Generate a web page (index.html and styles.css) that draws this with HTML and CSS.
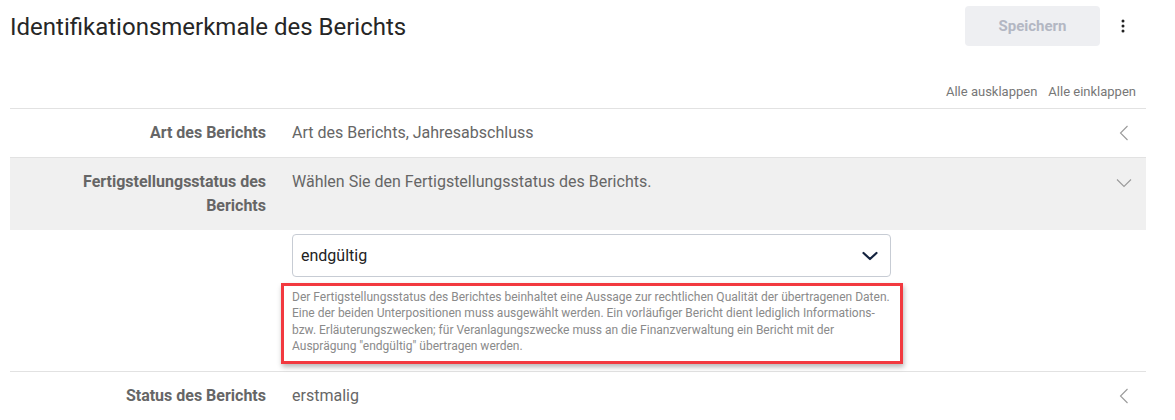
FILE: index.html
```html
<!DOCTYPE html>
<html lang="de">
<head>
<meta charset="utf-8">
<title>Identifikationsmerkmale des Berichts</title>
<link rel="stylesheet" href="styles.css">
</head>
<body>
<div class="page">
  <header class="header">
    <h1 class="title">Identifikationsmerkmale des Berichts</h1>
    <div class="actions">
      <button class="save-btn" disabled>Speichern</button>
      <button class="kebab" aria-label="Mehr">
        <svg width="4" height="14" viewBox="0 0 4 14"><circle cx="2" cy="2" r="1.5" fill="#222"/><circle cx="2" cy="7" r="1.5" fill="#222"/><circle cx="2" cy="12" r="1.5" fill="#222"/></svg>
      </button>
    </div>
  </header>

  <div class="toolbar">
    <a class="tool-link">Alle ausklappen</a>
    <a class="tool-link">Alle einklappen</a>
  </div>

  <div class="row">
    <div class="label">Art des Berichts</div>
    <div class="value">Art des Berichts, Jahresabschluss</div>
    <div class="chev">
      <svg width="10" height="16" viewBox="0 0 10 16"><path d="M8.5 1 L1.5 8 L8.5 15" fill="none" stroke="#9a9a9a" stroke-width="1.1"/></svg>
    </div>
  </div>

  <div class="row row-open">
    <div class="label">Fertigstellungsstatus des Berichts</div>
    <div class="value">Wählen Sie den Fertigstellungsstatus des Berichts.</div>
    <div class="chev">
      <svg width="16" height="10" viewBox="0 0 16 10"><path d="M1 1.5 L8 8.5 L15 1.5" fill="none" stroke="#9a9a9a" stroke-width="1.1"/></svg>
    </div>
  </div>

  <div class="detail">
    <div class="detail-body">
      <div class="select">
        <span class="select-text">endgültig</span>
        <svg class="select-chev" width="16" height="10" viewBox="0 0 16 10"><path d="M1.5 2 L8 8 L14.5 2" fill="none" stroke="#14233f" stroke-width="2.2" stroke-linecap="round" stroke-linejoin="round"/></svg>
      </div>
      <div class="help">Der Fertigstellungsstatus des Berichtes beinhaltet eine Aussage zur rechtlichen Qualität der übertragenen Daten. Eine der beiden Unterpositionen muss ausgewählt werden. Ein vorläufiger Bericht dient lediglich Informations- bzw. Erläuterungszwecken; für Veranlagungszwecke muss an die Finanzverwaltung ein Bericht mit der Ausprägung "endgültig" übertragen werden.</div>
    </div>
  </div>

  <div class="row">
    <div class="label">Status des Berichts</div>
    <div class="value">erstmalig</div>
    <div class="chev">
      <svg width="10" height="16" viewBox="0 0 10 16"><path d="M8.5 1 L1.5 8 L8.5 15" fill="none" stroke="#9a9a9a" stroke-width="1.1"/></svg>
    </div>
  </div>
</div>
</body>
</html>
```

FILE: styles.css
```css
* { box-sizing: border-box; }

html, body {
  margin: 0;
  padding: 0;
  background: #fff;
  font-family: Roboto, "Liberation Sans", Arial, sans-serif;
}

.page {
  width: 1136px;
  margin-left: 10px;
}

.header {
  height: 54px;
  display: flex;
  align-items: center;
  justify-content: space-between;
}

.title {
  margin: 0;
  font-size: 24px;
  font-weight: 400;
  color: #262626;
  letter-spacing: 0;
}

.actions {
  display: flex;
  align-items: center;
  margin-top: -2px;
}

.save-btn {
  width: 135px;
  height: 40px;
  border: none;
  border-radius: 4px;
  background: #eeeff2;
  color: #b3b7c3;
  font-family: Roboto, "Liberation Sans", Arial, sans-serif;
  font-weight: 700;
  font-size: 15px;
  padding: 0;
}

.kebab {
  width: 46px;
  height: 40px;
  border: none;
  background: transparent;
  display: flex;
  align-items: center;
  justify-content: center;
  padding: 0;
}

.toolbar {
  display: flex;
  justify-content: flex-end;
  gap: 11px;
  padding-right: 10px;
  padding-top: 29px;
  height: 54px;
}

.tool-link {
  font-size: 13px;
  color: #777;
  line-height: 18px;
}

.row {
  display: grid;
  grid-template-columns: 256px 1fr 44px;
  column-gap: 26px;
  border-top: 1px solid #e2e2e2;
  padding: 12px 0;
}

.row-open {
  background: #f0f0f0;
}

.label {
  text-align: right;
  font-weight: 700;
  font-size: 16px;
  line-height: 24px;
  color: #666;
  padding-left: 60px;
}

.value {
  font-size: 16px;
  line-height: 24px;
  color: #666;
}

.chev {
  display: flex;
  justify-content: center;
  align-items: flex-start;
  padding-top: 4px;
  padding-right: 0;
}

.row-open .chev {
  padding-top: 8px;
}

.detail {
  display: grid;
  grid-template-columns: 256px 1fr 44px;
  column-gap: 26px;
  padding: 4px 0 7px;
}

.detail-body {
  grid-column: 2;
  display: flex;
  flex-direction: column;
  gap: 6px;
}

.select {
  width: 599px;
  height: 43px;
  border: 1px solid #c7ccd4;
  border-radius: 4px;
  display: flex;
  align-items: center;
  justify-content: space-between;
  padding: 0 12px 0 8px;
  background: #fff;
}

.select-text {
  font-size: 16px;
  color: #222;
}

.help {
  margin-left: -11px;
  width: 622px;
  border: 3px solid #f2393f;
  box-shadow: 1px 3px 5px rgba(0, 0, 0, 0.28);
  padding: 3px 8px 7px 8px;
  font-size: 12px;
  line-height: 16.3px;
  color: #8a8a8a;
}
```
